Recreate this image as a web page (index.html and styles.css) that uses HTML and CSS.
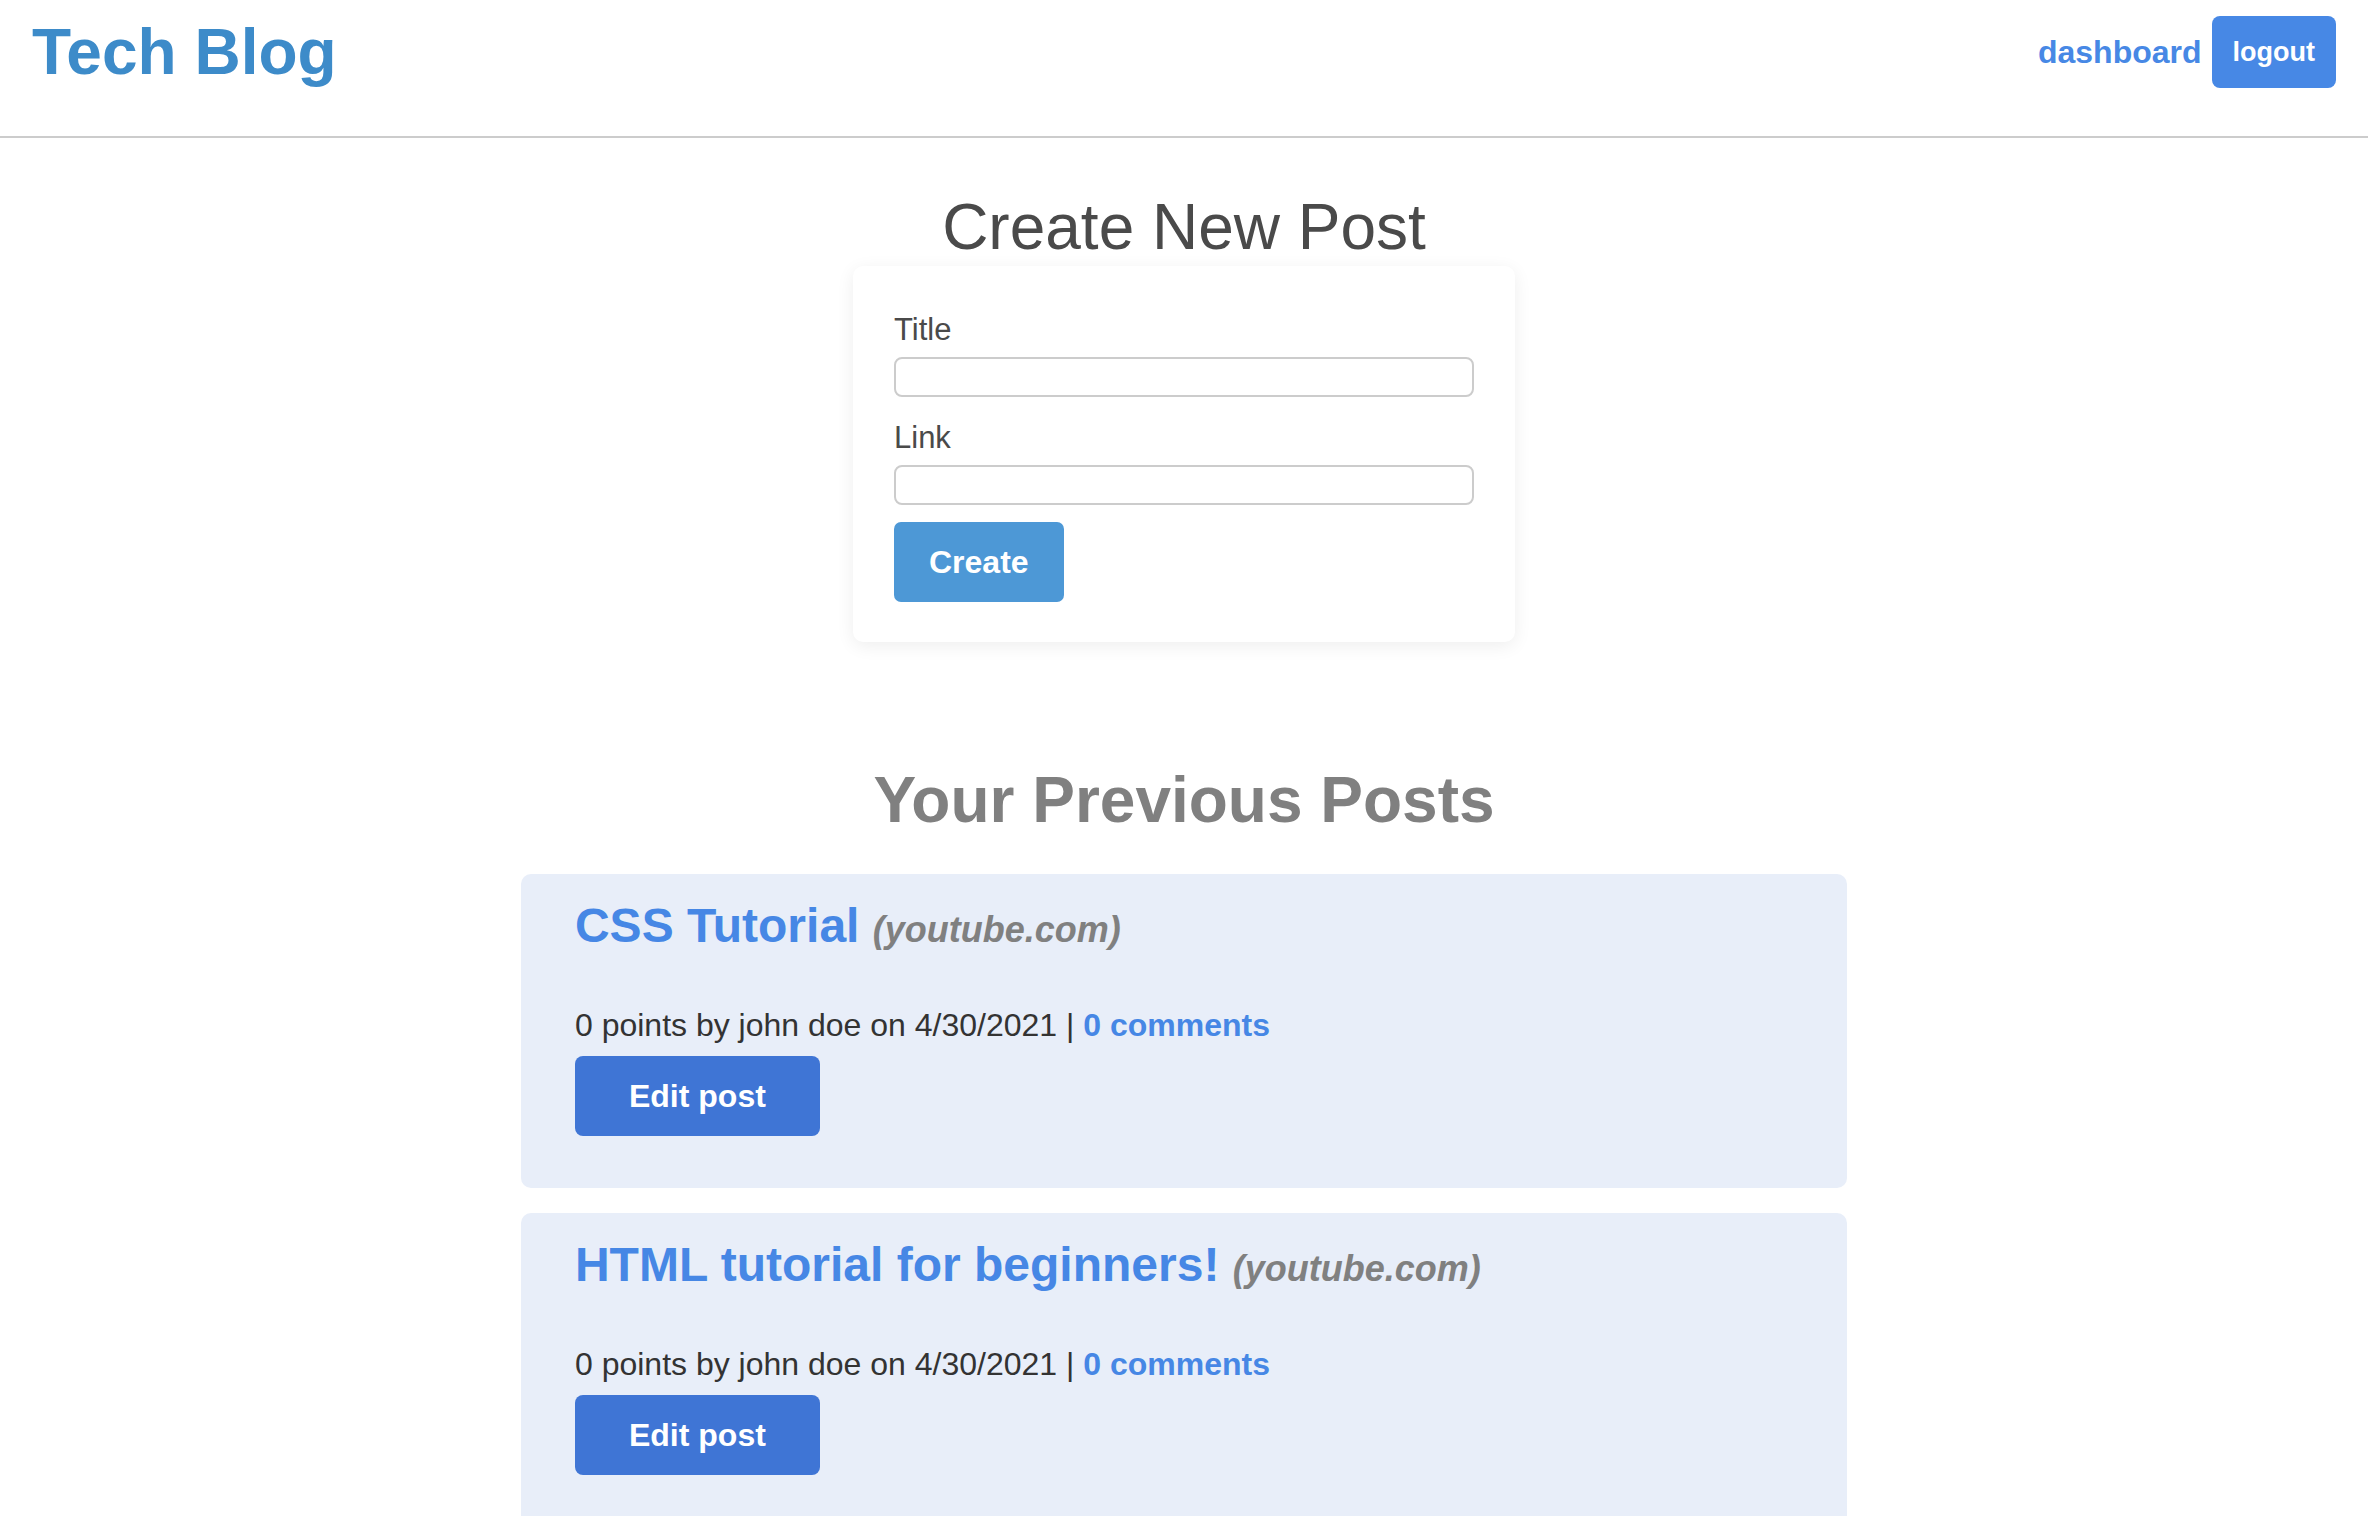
FILE: index.html
```
<!DOCTYPE html>
<html lang="en">
<head>
<meta charset="utf-8">
<title>Tech Blog</title>
<link rel="stylesheet" href="styles.css">
</head>
<body>
<header class="site-header">
  <h1 class="brand"><a href="#">Tech Blog</a></h1>
  <nav class="site-nav">
    <a class="nav-link" href="#">dashboard</a>
    <button class="logout-btn" type="button">logout</button>
  </nav>
</header>
<main class="page">
  <section class="create-section">
    <h2 class="create-heading">Create New Post</h2>
    <form class="form-card">
      <label class="field-label" for="post-title">Title</label>
      <input class="field-input" id="post-title" type="text">
      <label class="field-label" for="post-url">Link</label>
      <input class="field-input field-input-last" id="post-url" type="text">
      <button class="create-btn" type="button">Create</button>
    </form>
  </section>
  <section class="posts-section">
    <h2 class="posts-heading">Your Previous Posts</h2>
    <article class="post-card">
      <h3 class="post-title"><a href="#">CSS Tutorial</a> <span class="post-domain">(youtube.com)</span></h3>
      <p class="post-meta">0 points by john doe on 4/30/2021 | <a class="post-comments" href="#">0 comments</a></p>
      <button class="edit-btn" type="button">Edit post</button>
    </article>
    <article class="post-card">
      <h3 class="post-title"><a href="#">HTML tutorial for beginners!</a> <span class="post-domain">(youtube.com)</span></h3>
      <p class="post-meta">0 points by john doe on 4/30/2021 | <a class="post-comments" href="#">0 comments</a></p>
      <button class="edit-btn" type="button">Edit post</button>
    </article>
  </section>
</main>
</body>
</html>
```
FILE: styles.css
```
* { box-sizing: border-box; }

body {
  margin: 0;
  font-family: "Liberation Sans", Arial, Helvetica, sans-serif;
  background: #ffffff;
  color: #333333;
}

a { text-decoration: none; }

.site-header {
  display: flex;
  justify-content: space-between;
  align-items: flex-start;
  padding: 16px 32px 48px;
  border-bottom: 2px solid #cccccc;
}

.brand {
  margin: 0;
  font-size: 64px;
  line-height: 72px;
  font-weight: 700;
}

.brand a { color: #3d8bc9; }

.site-nav {
  display: flex;
  align-items: center;
  gap: 10px;
  height: 72px;
}

.nav-link {
  font-size: 32px;
  font-weight: 700;
  color: #4788e5;
}

.logout-btn {
  height: 72px;
  padding: 0 21px;
  border: none;
  border-radius: 8px;
  background: #4788e5;
  color: #ffffff;
  font-family: inherit;
  font-size: 27px;
  font-weight: 700;
}

.page {
  display: flex;
  flex-direction: column;
  align-items: center;
}

.create-section {
  display: flex;
  flex-direction: column;
  align-items: center;
  margin-top: 52px;
}

.create-heading {
  margin: 0 0 2px;
  font-size: 64px;
  line-height: 74px;
  font-weight: 400;
  color: #4a4a4a;
}

.form-card {
  display: flex;
  flex-direction: column;
  align-items: flex-start;
  width: 662px;
  padding: 46px 41px 40px;
  background: #ffffff;
  border-radius: 10px;
  box-shadow: 0 4px 18px rgba(0, 0, 0, 0.07);
}

.field-label {
  font-size: 31px;
  line-height: 36px;
  color: #4a4a4a;
  margin-bottom: 9px;
}

.field-input {
  width: 100%;
  height: 40px;
  border: 2px solid #cccccc;
  border-radius: 8px;
  background: #ffffff;
  margin: 0 0 23px;
  font-size: 24px;
}

.field-input-last { margin-bottom: 17px; }

.create-btn {
  height: 80px;
  padding: 0 35px;
  border: none;
  border-radius: 7px;
  background: #4d98d6;
  color: #ffffff;
  font-family: inherit;
  font-size: 32px;
  font-weight: 700;
}

.posts-section {
  display: flex;
  flex-direction: column;
  align-items: center;
  width: 56%;
  margin-top: 122px;
}

.posts-heading {
  margin: 0 0 38px;
  font-size: 64px;
  line-height: 72px;
  font-weight: 700;
  color: #808080;
}

.post-card {
  width: 100%;
  padding: 25px 54px 52px;
  margin-bottom: 25px;
  background: #e8eef9;
  border-radius: 10px;
}

.post-title {
  margin: 0;
  font-size: 48px;
  line-height: 54px;
  font-weight: 700;
}

.post-title a { color: #4687e5; }

.post-domain {
  font-size: 36px;
  line-height: 1;
  font-style: italic;
  font-weight: 700;
  color: #808080;
}

.post-meta {
  margin: 54px 0 12px;
  font-size: 32px;
  line-height: 37px;
  color: #333333;
}

.post-comments {
  font-weight: 700;
  color: #4687e5;
}

.edit-btn {
  display: block;
  height: 80px;
  padding: 0 54px;
  border: none;
  border-radius: 8px;
  background: #3f75d5;
  color: #ffffff;
  font-family: inherit;
  font-size: 32px;
  font-weight: 700;
}
```
